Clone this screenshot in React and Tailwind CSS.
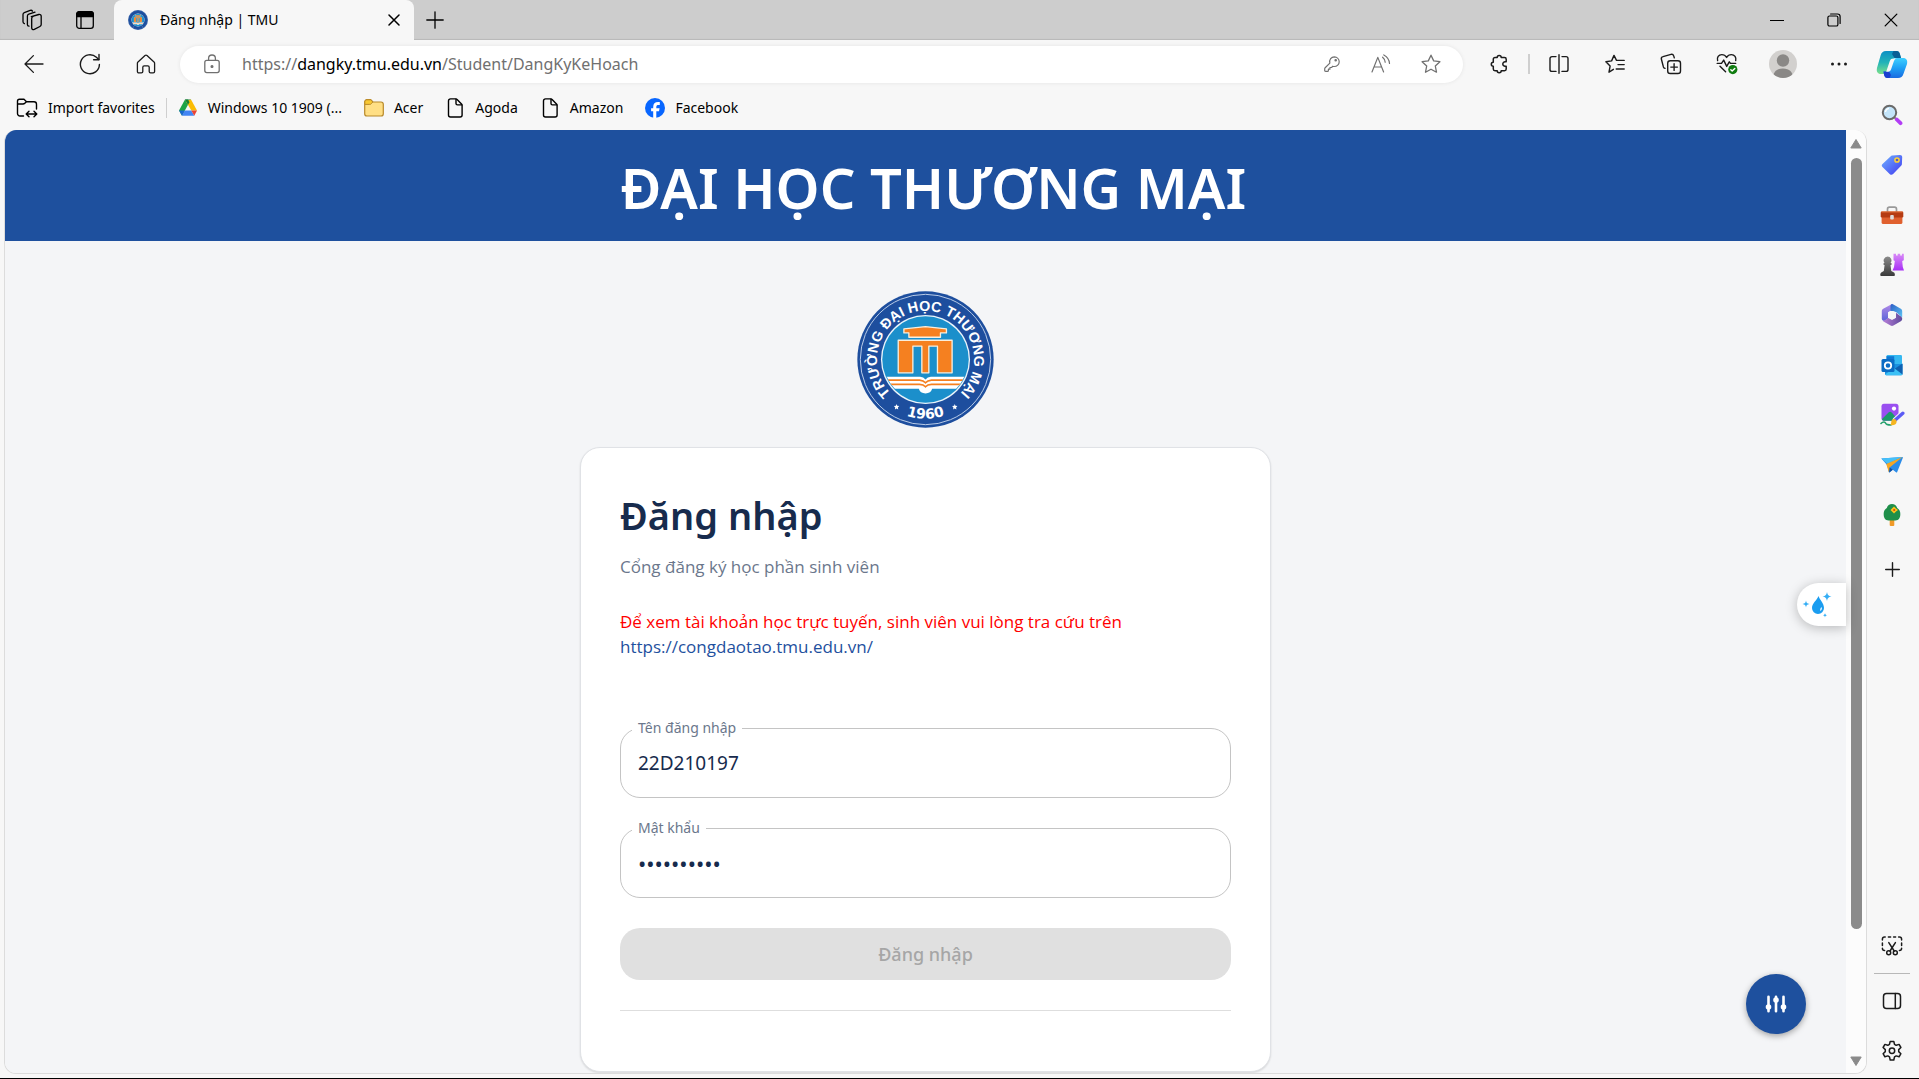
import React from "react";

const UI = "font-['Noto_Sans','Open_Sans',sans-serif]";

/* ---------- shared icon wrapper ---------- */

function Icon({ size = 20, box = 20, stroke = 1.3, className = "", children }) {
  return (
    <svg
      width={size}
      height={size}
      viewBox={`0 0 ${box} ${box}`}
      fill="none"
      stroke="currentColor"
      strokeWidth={stroke}
      strokeLinecap="round"
      strokeLinejoin="round"
      className={`shrink-0 ${className}`}
      aria-hidden="true"
    >
      {children}
    </svg>
  );
}

/* ---------- title bar icons ---------- */

const WorkspacesIcon = () => (
  <Icon size={22} box={22}>
    <path d="M10.3 7.6 17.8 5.5c1.4-.3 2.4.4 2.4 1.8v8.2c0 .8-.5 1.6-1.3 2l-5.6 2.8c-1.4.6-2.6 0-2.6-1.4V9.6c0-1 .6-1.8 1.5-2.1" />
    <path d="M8 17.2c-1-.1-1.6-.8-1.6-1.8V7c0-.9.6-1.6 1.4-1.9l6.2-2" />
    <path d="M3.4 14.6c-.9-.2-1.4-.9-1.4-1.8V5.6c0-.9.5-1.6 1.3-1.9L9.2 1.4c1-.3 1.8 0 2.3.7" />
  </Icon>
);

const TabActionsIcon = () => (
  <Icon>
    <rect x="1.7" y="1.7" width="16.6" height="16.6" rx="2.6" />
    <path d="M1.7 6.5V4.3a2.6 2.6 0 0 1 2.6-2.6h11.4a2.6 2.6 0 0 1 2.6 2.6v2.2z" fill="currentColor" />
    <path d="M6 6.5v11.8" />
  </Icon>
);

const CrossIcon = ({ size = 12, stroke = 1.5 }) => (
  <Icon size={size} box={12} stroke={stroke}>
    <path d="m1 1 10 10M11 1 1 11" />
  </Icon>
);

const PlusIcon = () => (
  <Icon size={18} box={18} stroke={1.3}>
    <path d="M9 .8v16.4M.8 9h16.4" />
  </Icon>
);

const AddAppIcon = () => (
  <Icon size={15} box={15} stroke={1.4}>
    <path d="M7.500.7v13.600M.7 7.500h13.600" />
  </Icon>
);

const MinimizeIcon = () => (
  <Icon size={14} box={14} stroke={1.2}>
    <path d="M.5 7.5h13" />
  </Icon>
);

const RestoreIcon = () => (
  <Icon size={14} box={14} stroke={1.2}>
    <rect x=".9" y="3" width="10" height="10" rx="1.6" />
    <path d="M3.6 1h6.9a2.6 2.6 0 0 1 2.6 2.6v6.9" />
  </Icon>
);

/* ---------- toolbar icons ---------- */

const BackIcon = () => (
  <Icon>
    <path d="M19 10H1.2M9.4 1.6 1 10l8.4 8.4" />
  </Icon>
);

const RefreshIcon = () => (
  <Icon size={22} box={22} stroke={1.4}>
    <path d="M20.4 11.4a9.5 9.5 0 1 1-3-7.1l2.4 2.3" />
    <path d="M20 1.4v5.4h-5.4" />
  </Icon>
);

const HomeIcon = () => (
  <Icon>
    <path d="M9 1.6a1.5 1.5 0 0 1 2 0l7 6.3c.4.4.6.9.6 1.4v8.2c0 .8-.6 1.4-1.4 1.4h-2.6c-.8 0-1.4-.6-1.4-1.4v-4.3c0-.8-.6-1.4-1.4-1.4H8.2c-.8 0-1.4.6-1.4 1.4v4.3c0 .8-.6 1.4-1.4 1.4H2.8c-.8 0-1.4-.6-1.4-1.4V9.3c0-.5.2-1 .6-1.4z" />
  </Icon>
);

const LockIcon = () => (
  <Icon>
    <rect x="2.8" y="6.4" width="14.4" height="12.2" rx="2" />
    <path d="M6.6 6.2V4.4a3.4 3.4 0 0 1 6.8 0v1.8" />
    <circle cx="10" cy="12.5" r=".9" fill="currentColor" />
  </Icon>
);

const KeyIcon = () => (
  <Icon size={18} stroke={1.3}>
    <path d="M12.6 2a5.6 5.6 0 0 1 5.4 5.5c0 3-2.400 5.300-5.600 5.300-.7 0-1.200-.1-1.700-.3l-1.200 1.400H7.700v1.800H6v1.400c0 .7-.4 1.100-1.100 1.100H3c-.7 0-1.100-.4-1.100-1.100v-1.700c0-.5.2-.9.5-1.200l5.200-5.100C6.700 5.200 9.200 2 12.600 2z" />
    <circle cx="14.100" cy="5.900" r=".8" fill="currentColor" />
  </Icon>
);

const ReadAloudIcon = () => (
  <Icon stroke={1.2}>
    <path d="M1 18 6.800 3.400 12.600 18M3 13h7.600" />
    <path d="M11.600 3.200c1.700 1.400 2.500 3 2.600 5M12.800.9c3.600 2 5.600 5 5.700 8.600" />
  </Icon>
);

const StarIcon = () => (
  <Icon>
    <path d="m10 1.200 2.700 5.700 6.200.8-4.600 4.300 1.200 6.200-5.500-3-5.500 3L5.700 12 1.100 7.700l6.200-.8z" />
  </Icon>
);

const PuzzleIcon = () => (
  <Icon stroke={1.5}>
    <path d="M8.200 3.500a2 2 0 0 1 4 0h3.300c1 0 1.700.7 1.700 1.700v2.600h-1.200a2.200 2.200 0 1 0 0 4.400h1.200v2.900c0 1-.7 1.700-1.700 1.700h-3.300a2 2 0 0 1-4 0H6c-1 0-1.700-.7-1.700-1.700V12.200a2 2 0 0 1 0-4V5.200c0-1 .7-1.700 1.700-1.700z" />
  </Icon>
);

const SplitIcon = () => (
  <Icon stroke={1.4}>
    <path d="M10 .8v18.400M7 2.600H3a2 2 0 0 0-2 2v10.800a2 2 0 0 0 2 2h4M13 2.600h4a2 2 0 0 1 2 2v10.800a2 2 0 0 1-2 2h-4" />
  </Icon>
);

const FavoritesIcon = () => (
  <Icon stroke={1.4}>
    <path d="M8.400 15.300 4 18.200l1.100-6.100L.9 7.700l5.700-.8L9 1.400l2.500 5h7.700M13 10.600h6.200M11.200 15h8" />
  </Icon>
);

const CollectionsIcon = () => (
  <Icon size={22} box={22} stroke={1.400}>
    <rect x="7.700" y="7.700" width="12.800" height="12.800" rx="2.600" />
    <path d="M14.100 10.800v6.600M10.800 14.100h6.600M5 15.400c-.8-.2-1.300-.7-1.600-1.500L1.400 6.200c-.3-1.200.4-2.300 1.600-2.600l8-2.200c1.200-.3 2.300.3 2.700 1.500l.6 2" />
  </Icon>
);

const HealthIcon = () => (
  <Icon size={22} box={22} stroke={1.400}>
    <path d="M1.600 7.600c-.9-3 1-6 4.200-6 2.100 0 3.700 1 4.800 2.800 1.100-1.800 2.700-2.800 4.800-2.800 3.200 0 5.100 3 4.300 6" />
    <path d="M1.200 10.400h4.300l2.200-3.300 3 6.300 2.600-4.600 1.200 1.600h5.200M4 13.300l5.600 5.500" />
    <circle cx="16.800" cy="16.600" r="4.600" fill="#107c10" stroke="none" />
    <path d="m14.800 16.700 1.400 1.400 2.600-2.700" stroke="#fff" />
  </Icon>
);

const AvatarIcon = () => (
  <svg width="28" height="28" viewBox="0 0 28 28" aria-hidden="true">
    <clipPath id="avatar-clip"><circle cx="14" cy="14" r="14" /></clipPath>
    <g clipPath="url(#avatar-clip)">
      <rect width="28" height="28" fill="#d2d0ce" />
      <circle cx="14" cy="10.500" r="6.200" fill="#8a8886" />
      <path d="M4 28c0-6 3.500-9.600 10-9.600S24 22 24 28z" fill="#8a8886" />
    </g>
  </svg>
);

const MoreIcon = () => (
  <Icon size={18} box={18}>
    <g fill="currentColor" stroke="none">
      <circle cx="2.500" cy="9" r="1.500" />
      <circle cx="9" cy="9" r="1.500" />
      <circle cx="15.500" cy="9" r="1.500" />
    </g>
  </Icon>
);

/* ---------- bookmark icons ---------- */

const ImportIcon = () => (
  <Icon size={22} box={22} stroke={1.400}>
    <path d="M7.500 19H4a2.500 2.500 0 0 1-2.500-2.500V4.200C1.500 3 2.400 2.200 3.500 2.200H8l2.500 2.500H18a2.500 2.500 0 0 1 2.500 2.500V12M1.500 7H7c.8 0 1.300-.2 1.800-.7l1.700-1.600" />
    <path d="M10.500 17h10M13 14.200 10.200 17l2.800 2.800M18 14.200l2.800 2.800-2.800 2.800" />
  </Icon>
);

const DriveIcon = () => (
  <svg width="20" height="20" viewBox="0 0 20 20" aria-hidden="true">
    <path d="M7 1.500h6L10 6.700z" fill="#188038" />
    <path d="M7 1.500 10 6.700 4 17.800 1 12.600z" fill="#1ea446" />
    <path d="M13 1.500 19 12.600h-5.700L7.800 3z" fill="#fbbc04" />
    <path d="M7 1.500 10 6.700l1.500-2.500L10 1.500z" fill="#188038" />
    <path d="M6.700 12.600h6.600l3 5.200H4z" fill="#4285f4" />
    <path d="M13.300 12.600H19l-2.700 5.200z" fill="#ea4335" />
    <path d="M1 12.600h5.700L4 17.800z" fill="#1967d2" />
  </svg>
);

const FolderIcon = () => (
  <svg width="20" height="20" viewBox="0 0 20 20" aria-hidden="true">
    <path d="M.7 4c0-1.400.9-2.300 2.300-2.300h3.700L9 4h8c1.400 0 2.300.9 2.300 2.300v9.400c0 1.400-.9 2.300-2.300 2.300H3c-1.400 0-2.300-.9-2.300-2.300z" fill="#ffdf85" stroke="#b8892a" strokeWidth="1.200" />
    <path d="M.8 6.400V4c0-1.300.9-2.200 2.200-2.200h3.700L8.800 4 7.300 5.700c-.4.500-.8.700-1.500.7z" fill="#f8c832" stroke="#b8892a" />
  </svg>
);

const FileIcon = () => (
  <Icon size={20} stroke={1.400}>
    <path d="M5.500.9h5.300c.5 0 1 .2 1.300.5l4.400 4.500c.4.400.6.8.6 1.300v9.800c0 1.200-.8 2-2 2H5.500c-1.200 0-2-.8-2-2V2.900c0-1.200.8-2 2-2z" />
    <path d="M11 1.200v4.300c0 .8.6 1.400 1.400 1.400h4.300" />
  </Icon>
);

const FacebookIcon = () => (
  <svg width="20" height="20" viewBox="0 0 20 20" aria-hidden="true">
    <circle cx="10" cy="10" r="10" fill="#0866ff" />
    <path d="M8.200 19.900v-6.600H6.100v-3.100h2.100V8.900c0-3.400 1.600-5 5-5 .6 0 1.200.1 1.600.2V7c-.3 0-.7-.1-1.200-.1-1.700 0-2.300.6-2.300 2.300v1h3.300l-.6 3.100h-2.700v6.600z" fill="#fff" />
  </svg>
);

/* ---------- sidebar icons ---------- */

const CopilotIcon = () => (
  <svg width="32" height="32" viewBox="0 0 32 32" aria-hidden="true">
    <defs>
      <linearGradient id="cp-a" x1="0" y1="0" x2="0" y2="1">
        <stop offset="0" stopColor="#0b8fc4" /><stop offset=".5" stopColor="#22b3b8" /><stop offset="1" stopColor="#7be08a" />
      </linearGradient>
      <linearGradient id="cp-b" x1="0" y1="0" x2="0" y2="1">
        <stop offset="0" stopColor="#3fd0ff" /><stop offset=".5" stopColor="#1ea0f5" /><stop offset="1" stopColor="#1a6be0" />
      </linearGradient>
    </defs>
    <path d="M10 3h10.500c2 0 2.800 1.200 3.400 3L25 10h-6.500L13 26H5c-3.500 0-4.800-2.500-4-6L4.600 7.500C5.400 4.500 7 3 10 3z" fill="url(#cp-a)" />
    <path d="M20.500 3c2 0 2.800 1.200 3.400 3L25 10h-6.500L16 6l1.500-3z" fill="#0a5f96" />
    <path d="M22 30H11.500c-2 0-2.800-1.200-3.400-3L7.500 23.500H13L18.500 10H27c3.500 0 4.800 2.500 4 6l-3.600 10C26.600 28.500 25 30 22 30z" fill="url(#cp-b)" />
    <path d="M11.500 30c-2 0-2.800-1.200-3.400-3l-.6-3.500H13l2 3.500-1.500 3z" fill="#1c3fd0" />
    <path d="M17.500 10.500H21c-2 0-2.800 1.600-3.400 3.600l-2.400 7c-.6 1.800-1.600 2.600-3 2.600h-2l3.600-10.700c.6-1.700 1.700-2.500 3.700-2.500z" fill="#f7f7f7" />
  </svg>
);

const SearchIcon = () => (
  <svg width="22" height="22" viewBox="0 0 22 22" aria-hidden="true">
    <path d="m13.500 13.500 2.700 2.500" stroke="#888" strokeWidth="2" />
    <path d="m15.800 15.500 3.700 3.700" stroke="#b23df5" strokeWidth="3.800" strokeLinecap="round" />
    <circle cx="8.500" cy="8.500" r="6.700" fill="#c4e5fa" stroke="#6a6a6a" strokeWidth="2" />
    <path d="M4.500 8a4 4 0 0 1 3.500-3.600" stroke="#fff" strokeWidth="1.200" fill="none" />
  </svg>
);

const TagIcon = () => (
  <svg width="22" height="22" viewBox="0 0 22 22" aria-hidden="true">
    <linearGradient id="tag" x1="0" y1="0" x2="1" y2="1">
      <stop offset="0" stopColor="#6fb3ff" /><stop offset="1" stopColor="#4038f0" />
    </linearGradient>
    <path d="M11.200 1.500 19 .9c1.300 0 2.200.8 2.200 2l-.3 7.300c0 .6-.3 1.200-.8 1.600l-8 8.300c-1 1-2.200 1-3.200.1L1.500 13c-1-1-1-2 0-3l8-7.600c.5-.5 1-.8 1.700-.9z" fill="url(#tag)" />
    <circle cx="16" cy="6" r="2.100" fill="#5a5ac0" stroke="#ffd335" strokeWidth="1.500" />
  </svg>
);

const ToolboxIcon = () => (
  <svg width="24" height="20" viewBox="0 0 24 20" aria-hidden="true">
    <path d="M7.500 7V4.200C7.500 3 8.300 2.200 9.500 2.200h5c1.200 0 2 .8 2 2V7" fill="none" stroke="#999" strokeWidth="1.700" />
    <rect x="1.600" y="9" width="20.800" height="10" rx="1.600" fill="#e0602e" />
    <rect x=".7" y="6.500" width="22.600" height="6" rx="1.200" fill="#b53b12" />
    <path d="M1.500 6.900h21" stroke="#e87a44" />
    <rect x="10.200" y="10" width="3.600" height="4.600" rx="1" fill="#ddd" />
  </svg>
);

const ChessIcon = () => (
  <svg width="24" height="24" viewBox="0 0 24 24" aria-hidden="true">
    <linearGradient id="rook" x1="0" y1="0" x2="0" y2="1">
      <stop offset="0" stopColor="#d98bf7" /><stop offset="1" stopColor="#a82ff5" />
    </linearGradient>
    <linearGradient id="pawn" x1="0" y1="0" x2="0" y2="1">
      <stop offset="0" stopColor="#8b8b8b" /><stop offset="1" stopColor="#3a3a3a" />
    </linearGradient>
    <path d="M13.500.8H16v1.700h1.700V.8h2.500v1.700h1.700V.8h1.900v6.400l-1.600.8.600 6 1.200 3.500H12.500l1.500-3.500.8-6-1.300-.8z" fill="url(#rook)" />
    <path d="M7.500 3.500a4 4 0 0 1 3 6.600h1v1.800h-1l.8 6.100 2.700 1.600c1 .6 1.200 3.400.3 3.400H.9c-1 0-.7-2.800.3-3.400L3.800 18l.8-6.100h-1v-1.800h1a4 4 0 0 1 2.900-6.600z" fill="url(#pawn)" />
  </svg>
);

const M365Icon = () => (
  <svg width="22" height="24" viewBox="0 0 22 24" aria-hidden="true">
    <linearGradient id="m365-l" x1="0" y1="0" x2="0" y2="1">
      <stop offset="0" stopColor="#b48be8" /><stop offset="1" stopColor="#5a63d8" />
    </linearGradient>
    <linearGradient id="m365-r" x1="0" y1="0" x2="1" y2="1">
      <stop offset="0" stopColor="#2c5fc4" /><stop offset="1" stopColor="#5cc4f5" />
    </linearGradient>
    <linearGradient id="m365-b" x1="0" y1="0" x2="1" y2="0">
      <stop offset="0" stopColor="#b77fd8" /><stop offset="1" stopColor="#5f4a9c" />
    </linearGradient>
    <path d="M11.500.8 2.200 5.800C1.300 6.300.8 7.200.8 8.200v7.600c0 1.200 1 2.200 2.600 2.200L7 15.500V9.200l5.500-3z" fill="url(#m365-l)" />
    <path d="M11 1c-1 .2-1.500 1-1.500 2.200v4.600L15 9l6.200 5.500V8.200c0-1-.5-1.900-1.400-2.400l-7.400-4.300C12 1.200 11.500 1 11 1z" fill="url(#m365-r)" />
    <path d="M11 23c.5 0 1-.2 1.400-.5l7.400-4.300c.9-.5 1.400-1.400 1.400-2.400 0-1.300-.7-2-2-2.800L15 9.800v5L11 17l-3.500-2L2 18.200l7.600 4.300c.4.300.9.500 1.400.5z" fill="url(#m365-b)" />
    <circle cx="11" cy="12" r="4" fill="#f7f7f7" />
  </svg>
);

const OutlookIcon = () => (
  <svg width="22" height="22" viewBox="0 0 22 22" aria-hidden="true">
    <rect x="5.500" y="1" width="15.500" height="11" rx="1.200" fill="#35b8f1" />
    <path d="M5.500 2.200h7.700V7H5.500z" fill="#0f78d4" />
    <path d="M4 10 21.500 10v10c0 .7-.5 1.200-1.200 1.200H5.200c-.7 0-1.200-.5-1.200-1.200z" fill="#1a90e0" />
    <path d="m21.500 9.500-9 6 9 5z" fill="#0f60b0" />
    <path d="m4 20.500 9-6.500 8.500 6.500-1 .7H5z" fill="#3cc0f5" />
    <rect x=".5" y="5" width="13" height="13" rx="1.500" fill="#0b6cc4" />
    <circle cx="7" cy="11.500" r="3.200" fill="none" stroke="#fff" strokeWidth="1.800" />
  </svg>
);

const DesignerIcon = () => (
  <svg width="25" height="24" viewBox="0 0 25 24" aria-hidden="true">
    <rect x="1.500" y=".8" width="17" height="17" rx="2.500" fill="#9a4ff0" />
    <path d="M2 16 8.500 9.500c1-.9 2.200-.9 3.200 0l5.800 6.500-1.500 1.800H4c-1 0-2-.8-2-1.800z" fill="#1b9a6a" />
    <circle cx="14" cy="5.600" r="2.100" fill="#fff" />
    <path d="M1 20.500c2-2 4-2 4.500-.5s2 2 5.500 2" fill="none" stroke="#22a06b" strokeWidth="1.600" strokeLinecap="round" />
    <path d="m15.500 16.800 7.300-6.600" stroke="#f7f7f7" strokeWidth="5.500" strokeLinecap="round" />
    <path d="m15.500 16.800 7.300-6.600" stroke="#5b5bf5" strokeWidth="3.400" strokeLinecap="round" />
    <path d="M14 16c2 .2 3 1.500 2.500 3.500-.5 2.200-3 3.300-6.500 2.500 1.300-.7 1-1.500 1.300-3.200.3-1.800 1.200-2.700 2.700-2.800z" fill="#f5b520" />
  </svg>
);

const PlaneIcon = () => (
  <svg width="22" height="18" viewBox="0 0 22 18" aria-hidden="true">
    <path d="M.3 2.600 21.200 1c.6 0 .8.4.6.9L16.200 16c-.2.6-.7.7-1.200.3l-3.200-2.600-3 2.500c-.5.400-1 .2-1.100-.4L6.300 9.300z" fill="#2b8ce8" />
    <path d="M.3 2.600 21.500 1 6.300 7.800z" fill="#45c0f8" />
    <path d="m5.200 8 16.300-7L8.600 11.500l-.5 4.700-.4-.4z" fill="#f5a623" />
    <path d="m8.600 11.500 3.200 2.200-3.600 2.700z" fill="#1450a0" />
  </svg>
);

const TreeIcon = () => (
  <svg width="20" height="24" viewBox="0 0 20 24" aria-hidden="true">
    <rect x="7.700" y="15" width="4.600" height="8" rx="1" fill="#f09a28" />
    <path d="M10 1c2.600 0 4.400 1.500 5.200 4 1.800 1.200 2.800 2.800 3 4.600.6 4.200-1 7.900-4.700 7.900h-7c-3.700 0-5.300-3.700-4.700-7.900C2 7.800 3 6.200 4.800 5 5.600 2.500 7.400 1 10 1z" fill="#1f8f4a" />
    <path d="M12 3.500 14 5.500 16 7l-2 1.500L12 10.500 10 8.500 8.500 7 10 5.500z" fill="#ffc21a" />
    <circle cx="12.200" cy="7" r="1.100" fill="#c94a10" />
  </svg>
);

const SnipIcon = () => (
  <Icon size={22} box={22} stroke={1.500}>
    <path d="M1.400 5V4.200c0-1.300.8-2.200 2.200-2.200h.6M7.400 2h2.200M12.600 2h2M17.600 2h.8c1.400 0 2.200.9 2.200 2.200V5M20.600 8v2.600M1.400 8v2.600M1.400 13.200c0 1.400.8 2.300 2.200 2.300M20.600 13.200c0 1.400-.8 2.300-2.200 2.300" />
    <path d="m7.800 7.600 5.400 8.400M14.400 7.600 9 16" />
    <circle cx="7.700" cy="17.800" r="2" />
    <circle cx="14.300" cy="17.800" r="2" />
  </Icon>
);

const PanelIcon = () => (
  <Icon size={20} stroke={1.500}>
    <rect x="1.500" y="2.500" width="17" height="15" rx="3" />
    <path d="M13.300 2.500v15" />
  </Icon>
);

const GearIcon = () => (
  <Icon size={22} box={22} stroke={1.500}>
    <path d="M9.200 1.400h3.600l.7 2.900 1.700 1 2.900-.9 1.800 3.100-2.200 2.100v2l2.200 2.100-1.800 3.100-2.900-.9-1.700 1-.7 3.100H9.200l-.7-3.100-1.700-1-2.900.9-1.800-3.100 2.200-2.100v-2L2.100 7.500l1.800-3.100 2.900.9 1.700-1z" />
    <circle cx="11" cy="10.700" r="2.700" />
  </Icon>
);

/* ---------- university emblem ---------- */

function Emblem({ size, id, label = true }) {
  return (
    <svg width={size} height={size} viewBox="0 0 412 412" role="img" aria-label="Trường Đại học Thương mại" className="shrink-0">
      <defs>
        <path id={`${id}-top`} d="M 133 332 A 146 146 0 1 1 279 332" />
        <path id={`${id}-bottom`} d="M 28 206 A 178 178 0 0 0 384 206" />
        <clipPath id={`${id}-clip`}><circle cx="206" cy="206" r="128" /></clipPath>
      </defs>
      <circle cx="206" cy="206" r="205" fill="#1d4e9e" />
      <circle cx="206" cy="206" r="196" fill="none" stroke="#b9cbe6" strokeWidth="3" />
      <circle cx="206" cy="206" r="134" fill="#e9f4fb" />
      <circle cx="206" cy="206" r="130" fill="#1b8fcb" />
      <g clipPath={`url(#${id}-clip)`}>
        <path d="M60 258H190Q200 258 206 266Q212 258 222 258H350V294H226Q222 308 206 308Q190 308 186 294H60z" fill="#fff" />
        <path d="M60 268H188Q200 269 206 276Q212 269 224 268H350M60 281H188Q200 281 206 288Q212 281 224 281H350" fill="none" stroke="#f58020" strokeWidth="5" />
      </g>
      <g fill="#f58020" stroke="#f8eedd" strokeWidth="4" strokeLinejoin="round">
        <path d="M141 114 206 107 269 114V126H251V139H156V126H141z" />
        <path d="M124 148H286V246H242V166H216V246H195V166H168V246H124z" />
      </g>
      {label && (
        <g fill="#fff" className="font-bold">
          <text fontSize="43" textAnchor="middle" className="font-['Liberation_Sans',sans-serif]">
            <textPath href={`#${id}-top`} startOffset="50%">TRƯỜNG ĐẠI HỌC THƯƠNG MẠI</textPath>
          </text>
          <text fontSize="42" textAnchor="middle" className="font-['DejaVu_Sans',sans-serif]">
            <textPath href={`#${id}-bottom`} startOffset="50%">1960</textPath>
          </text>
        </g>
      )}
      <g fill="#fff">
        <path d="m119 340 2 5 6 1-4 4 1 6-5-3-5 3 1-6-4-4 6-1z" />
        <path d="m294 340 2 5 6 1-4 4 1 6-5-3-5 3 1-6-4-4 6-1z" />
      </g>
    </svg>
  );
}

/* ---------- browser chrome ---------- */

function TitleBar() {
  return (
    <header className="flex h-10 shrink-0 items-stretch bg-[#cdcdcd] text-black shadow-[inset_0_-1px_1px_rgba(0,0,0,0.1)]">
      <div className="flex w-[114px] items-center gap-8 pl-[21px]">
        <button aria-label="Workspaces"><WorkspacesIcon /></button>
        <button aria-label="Tab actions"><TabActionsIcon /></button>
      </div>
      <div className="flex w-[300px] items-center rounded-t-lg bg-[#f7f7f7] pl-3.5 pr-3.5">
        <Emblem size={20} id="tab" label={false} />
        <span className="ml-3 flex-1 text-sm">Đăng nhập | TMU</span>
        <button aria-label="Close tab"><CrossIcon /></button>
      </div>
      <button aria-label="New tab" className="ml-3"><PlusIcon /></button>
      <div className="ml-auto flex items-center">
        <button aria-label="Minimize" className="flex w-[57px] justify-center"><MinimizeIcon /></button>
        <button aria-label="Restore" className="flex w-[57px] justify-center"><RestoreIcon /></button>
        <button aria-label="Close" className="flex w-[57px] justify-center"><CrossIcon size={14} stroke={1.1} /></button>
      </div>
    </header>
  );
}

function ToolButton({ label, children }) {
  return (
    <button aria-label={label} className="flex h-10 w-14 shrink-0 items-center justify-center">
      {children}
    </button>
  );
}

function Toolbar() {
  return (
    <div className="flex h-12 shrink-0 items-center pl-1.5 text-[#1b1b1b]">
      <ToolButton label="Back"><BackIcon /></ToolButton>
      <ToolButton label="Refresh"><RefreshIcon /></ToolButton>
      <ToolButton label="Home"><HomeIcon /></ToolButton>
      <div className="ml-1.5 flex h-[37px] flex-1 items-center rounded-full bg-white px-[22px] text-[#707070] shadow-[0_0_4px_rgba(0,0,0,0.08)]">
        <button aria-label="Site information"><LockIcon /></button>
        <a href="https://dangky.tmu.edu.vn/Student/DangKyKeHoach" className="ml-5 flex-1 text-base">
          https://<span className="text-black">dangky.tmu.edu.vn</span>/Student/DangKyKeHoach
        </a>
        <div className="flex items-center gap-[30px]">
          <button aria-label="Saved passwords"><KeyIcon /></button>
          <button aria-label="Read aloud"><ReadAloudIcon /></button>
          <button aria-label="Add to favorites"><StarIcon /></button>
        </div>
      </div>
      <div className="ml-2 flex items-center">
        <ToolButton label="Extensions"><PuzzleIcon /></ToolButton>
        <span className="mx-px h-5 w-0.5 bg-[#cfcfcf]" />
        <ToolButton label="Split screen"><SplitIcon /></ToolButton>
        <ToolButton label="Favorites"><FavoritesIcon /></ToolButton>
        <ToolButton label="Collections"><CollectionsIcon /></ToolButton>
        <ToolButton label="Browser essentials"><HealthIcon /></ToolButton>
        <ToolButton label="Profile"><AvatarIcon /></ToolButton>
        <ToolButton label="Settings and more"><MoreIcon /></ToolButton>
      </div>
    </div>
  );
}

const bookmarks = [
  { label: "Windows 10 1909 (...", icon: <DriveIcon /> },
  { label: "Acer", icon: <FolderIcon /> },
  { label: "Agoda", icon: <FileIcon /> },
  { label: "Amazon", icon: <FileIcon /> },
  { label: "Facebook", icon: <FacebookIcon /> },
];

function BookmarksBar() {
  return (
    <nav className="flex h-[42px] shrink-0 items-center pb-0.5 pl-4 text-sm text-black">
      <a href="#import" className="flex items-center gap-2.5"><ImportIcon />Import favorites</a>
      <span className="mx-[11px] h-5 w-px bg-[#cfcfcf]" />
      <div className="flex gap-[22px]">
        {bookmarks.map((b) => (
          <a key={b.label} href="#bookmark" className="flex items-center gap-2.5">{b.icon}{b.label}</a>
        ))}
      </div>
    </nav>
  );
}

const sidebarApps = [
  ["Search", SearchIcon],
  ["Shopping", TagIcon],
  ["Tools", ToolboxIcon],
  ["Games", ChessIcon],
  ["Microsoft 365", M365Icon],
  ["Outlook", OutlookIcon],
  ["Designer", DesignerIcon],
  ["Drop", PlaneIcon],
  ["E-tree", TreeIcon],
];

function Sidebar() {
  return (
    <aside className="flex w-[52px] shrink-0 flex-col items-center pr-0.5 text-[#1b1b1b]">
      <button aria-label="Copilot" className="mb-0.5 flex h-12 items-center"><CopilotIcon /></button>
      {sidebarApps.map(([label, Glyph]) => (
        <button key={label} aria-label={label} className="flex h-[50px] w-full items-center justify-center"><Glyph /></button>
      ))}
      <button aria-label="Customize" className="mt-1 flex h-[50px] w-full items-center justify-center"><AddAppIcon /></button>
      <button aria-label="Screenshot" className="mt-auto flex h-[50px] w-full items-center justify-center"><SnipIcon /></button>
      <span className="my-0.5 h-px w-9 bg-[#b8b8b8]" />
      <button aria-label="Toggle sidebar" className="flex h-[50px] w-full items-center justify-center"><PanelIcon /></button>
      <button aria-label="Sidebar settings" className="mb-0.5 flex h-[50px] w-full items-center justify-center"><GearIcon /></button>
    </aside>
  );
}

function Scrollbar() {
  return (
    <div className="flex w-5 shrink-0 flex-col items-center bg-[#fcfcfc] pb-1.5 pt-2 text-[#8b8b8b]" aria-hidden="true">
      <svg width="12" height="12" viewBox="0 0 12 12"><path d="M6 1.500 11.200 10H.8z" fill="currentColor" stroke="currentColor" strokeLinejoin="round" /></svg>
      <div className="mt-2 w-[11px] grow-[86] rounded-full bg-[#8b8b8b]" />
      <div className="grow-[14]" />
      <svg width="12" height="12" viewBox="0 0 12 12"><path d="M6 10.500 11.200 2H.8z" fill="currentColor" stroke="currentColor" strokeLinejoin="round" /></svg>
    </div>
  );
}

/* ---------- login page ---------- */

function Field({ id, label, type, value, autoComplete, textSize }) {
  return (
    <fieldset className="rounded-[20px] border border-[#c4c4c4] px-[11px] text-[#172b4d]">
      <legend className="px-1.5 text-sm leading-[18px] text-[#6b778c]">
        <label htmlFor={id}>{label}</label>
      </legend>
      <input
        id={id}
        type={type}
        defaultValue={value}
        autoComplete={autoComplete}
        className={`block h-[60px] w-full bg-transparent px-1.5 pb-2 outline-none ${textSize}`}
      />
    </fieldset>
  );
}

function LoginCard() {
  return (
    <section className="w-full max-w-[691px] rounded-[20px] border border-[#e0e2e6] bg-white px-[39px] pb-[60px] pt-[35px] shadow-[0_1px_2px_rgba(0,0,0,0.12)]">
      <h2 className="text-[38px] font-semibold leading-[64px] text-[#172b4d]">Đăng nhập</h2>
      <div className="mt-0.5 font-['Open_Sans','Noto_Sans',sans-serif] text-[17px]">
        <p className="leading-9 text-[#6b778c]">Cổng đăng ký học phần sinh viên</p>
        <p className="mt-6 leading-[25px] text-[#ff0000]">
          Để xem tài khoản học trực tuyến, sinh viên vui lòng tra cứu trên
          <a href="https://congdaotao.tmu.edu.vn/" className="block text-[#1e509e]">https://congdaotao.tmu.edu.vn/</a>
        </p>
      </div>
      <form className="mt-[60px] flex flex-col" onSubmit={(e) => e.preventDefault()}>
        <Field id="username" label="Tên đăng nhập" type="text" value="22D210197" autoComplete="username" textSize="text-[19px]" />
        <div className="mt-[21px]">
          <Field id="password" label="Mật khẩu" type="password" value="matkhau123" autoComplete="current-password" textSize="text-[22px]" />
        </div>
        <button type="submit" disabled className="mt-[30px] h-[52px] rounded-[20px] bg-[#e0e0e0] text-lg font-medium text-[#a6a6a6]">
          Đăng nhập
        </button>
      </form>
      <hr className="mt-[30px] border-[#dedede]" />
    </section>
  );
}

function LoginPage() {
  return (
    <div className="relative flex min-w-0 flex-1 flex-col bg-[#f4f5f7]">
      <div className="bg-[#1e509e] px-4 pb-3.5 pt-[18px]">
        <h1 className="mx-auto max-w-[610px] whitespace-nowrap text-[56px] font-semibold leading-[79px] text-white">
          ĐẠI HỌC THƯƠNG MẠI
        </h1>
      </div>
      <main className="flex flex-col items-center pt-[50px]">
        <Emblem size={137} id="main" />
        <div className="mt-[19px] flex w-full justify-center"><LoginCard /></div>
      </main>
      <button aria-label="Drop assistant" className="absolute right-0 top-[453px] flex h-[43px] w-[49px] items-center rounded-l-full bg-white pl-[5px] shadow-[0_2px_12px_rgba(0,0,0,0.25)]">
        <svg width="30" height="28" viewBox="0 0 30 28" aria-hidden="true">
          <path d="M16.500 5c1 3.500 5.500 7 5.500 12a6 6 0 0 1-12 0c0-5 5-7.500 6.500-12z" fill="#1b9df0" />
          <path d="M19.500 16c.8 1.600.2 3.400-1.200 4-.3-1.600.2-3 1.200-4z" fill="#fff" />
          <g fill="#35aef5">
            <path d="M25 1c.6 3 1.200 3.700 4.500 4.500C26.200 6.300 25.600 7 25 10c-.6-3-1.200-3.700-4.500-4.500C23.800 4.700 24.400 4 25 1z" />
            <path d="M4 9.500c.4 2.400 1 3 3.500 3.500-2.500.5-3.100 1.100-3.500 3.500-.4-2.400-1-3-3.500-3.500 2.500-.5 3.100-1.100 3.500-3.500z" />
            <path d="M23 22c.3 1.500.6 1.900 2.200 2.200-1.600.3-1.900.7-2.200 2.200-.3-1.500-.6-1.900-2.200-2.200 1.600-.3 1.900-.7 2.200-2.200z" />
          </g>
        </svg>
      </button>
      <button aria-label="Adjust settings" className="absolute bottom-[39px] right-10 flex size-[60px] items-center justify-center rounded-full bg-[#1e509e] text-white shadow-[0_2px_6px_rgba(0,0,0,0.35)]">
        <svg width="22" height="20" viewBox="0 0 22 20" fill="currentColor" stroke="currentColor" strokeWidth="2.600" strokeLinecap="round" aria-hidden="true">
          <path d="M3.500 2.800v14.400M11 2.800v14.400M18.500 2.800v14.400" />
          <circle cx="3.500" cy="13" r="1.500" />
          <circle cx="11" cy="6" r="1.500" />
          <circle cx="18.500" cy="13" r="1.500" />
        </svg>
      </button>
    </div>
  );
}

export default function App() {
  return (
    <div className={`${UI} flex h-screen flex-col overflow-hidden border-b border-black bg-[#f7f7f7]`}>
      <TitleBar />
      <div className="flex min-h-0 flex-1">
        <div className="flex min-w-0 flex-1 flex-col">
          <Toolbar />
          <BookmarksBar />
          <div className="mb-1 ml-1 flex min-h-0 flex-1 overflow-hidden rounded-xl border border-t-0 border-[#dcdcdc]">
            <LoginPage />
            <Scrollbar />
          </div>
        </div>
        <Sidebar />
      </div>
    </div>
  );
}
